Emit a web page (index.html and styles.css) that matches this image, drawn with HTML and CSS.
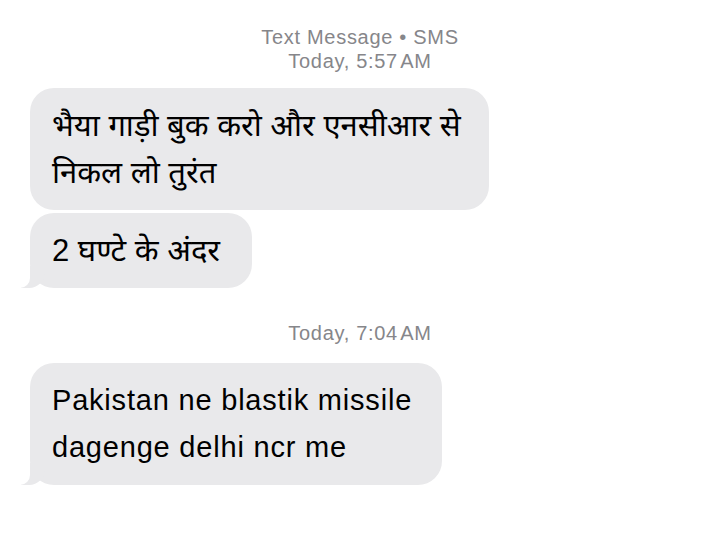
FILE: index.html
```html
<!DOCTYPE html>
<html lang="hi">
<head>
<meta charset="utf-8">
<link rel="stylesheet" href="styles.css">
</head>
<body>
<main class="thread">
  <div class="meta">
    <div>Text Message • SMS</div>
    <div>Today, 5:57&#8202;AM</div>
  </div>
  <div class="group first">
    <div class="bubble deva">भैया गाड़ी बुक करो और एनसीआर से<br>निकल लो तुरंत</div>
    <div class="bubble deva short tail">2 घण्टे के अंदर</div>
  </div>
  <div class="meta second">
    <div>Today, 7:04&#8202;AM</div>
  </div>
  <div class="group">
    <div class="bubble tail">Pakistan ne blastik missile<br>dagenge delhi ncr me</div>
  </div>
</main>
</body>
</html>
```
FILE: styles.css
```css
html, body {
  margin: 0;
  padding: 0;
  background: #ffffff;
}
.thread {
  width: 720px;
  height: 542px;
  padding-top: 25px;
  box-sizing: border-box;
  font-family: "Liberation Sans", "Noto Sans", "Noto Sans Devanagari", sans-serif;
  overflow: hidden;
}
.meta {
  text-align: center;
  font-size: 20px;
  letter-spacing: 0.7px;
  line-height: 24px;
  color: #86868a;
}
.meta.second {
  margin-top: 33px;
}
.group {
  display: flex;
  flex-direction: column;
  align-items: flex-start;
  gap: 3px;
  padding-left: 30px;
  margin-top: 18px;
}
.group.first {
  margin-top: 15px;
}
.bubble {
  position: relative;
  background: #e9e9eb;
  color: #000000;
  border-radius: 24px;
  padding: 14px 30px 14px 22px;
  font-size: 29px;
  letter-spacing: 0.8px;
  line-height: 47px;
}
.bubble.deva {
  font-size: 31px;
  letter-spacing: 0;
  padding-right: 28px;
}
.bubble.deva.short {
  padding-right: 32px;
}
.bubble.tail::before {
  content: "";
  position: absolute;
  bottom: 0;
  left: -9px;
  width: 24px;
  height: 22px;
  background: #e9e9eb;
  border-bottom-right-radius: 16px;
  z-index: -1;
}
.bubble.tail::after {
  content: "";
  position: absolute;
  bottom: 0;
  left: -11px;
  width: 11px;
  height: 22px;
  background: #ffffff;
  border-bottom-right-radius: 10px;
  z-index: -1;
}
.bubble.tail {
  z-index: 0;
}
```
